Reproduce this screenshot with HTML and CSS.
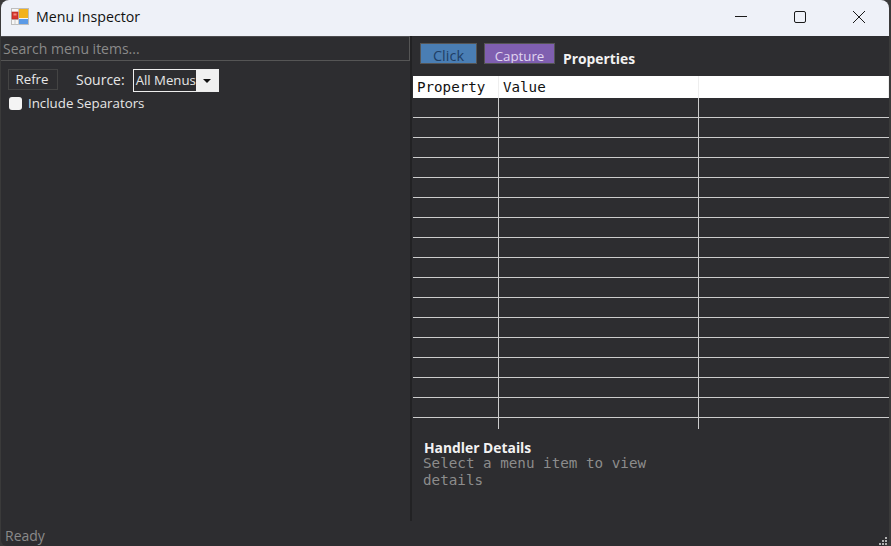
FILE: index.html
```html
<!DOCTYPE html>
<html lang="en">
<head>
<meta charset="utf-8">
<title>Menu Inspector</title>
<link rel="stylesheet" href="styles.css">
</head>
<body>
<div class="window">
  <header class="titlebar">
    <svg class="app-icon" width="18" height="17" viewBox="0 0 18 17">
      <rect x="0.5" y="0.5" width="17" height="16" fill="#f6f6f6" stroke="#bdbdbd"/>
      <path d="M0.5 11.5H7.5M4 11.5V16.5M7.5 0.5V16.5" stroke="#c8c8c8" fill="none"/>
      <rect x="1" y="4" width="6" height="7" fill="#d8342c" stroke="#b02a24" stroke-width="0.6"/>
      <rect x="2.5" y="5.5" width="3" height="2" fill="#ee8a80"/>
      <rect x="8" y="1" width="9" height="9" fill="#f2b21c"/>
      <rect x="8" y="11" width="9" height="5" fill="#5b9ae6"/>
    </svg>
    <span class="title">Menu Inspector</span>
    <div class="controls">
      <button class="ctl" aria-label="Minimize"><svg width="12" height="12" viewBox="0 0 12 12"><path d="M0 5.5H12" stroke="#1a1a1a" fill="none"/></svg></button>
      <button class="ctl" aria-label="Maximize"><svg width="12" height="12" viewBox="0 0 12 12"><rect x="0.5" y="0.5" width="11" height="11" rx="1.5" stroke="#1a1a1a" fill="none"/></svg></button>
      <button class="ctl" aria-label="Close"><svg width="12" height="12" viewBox="0 0 12 12"><path d="M0 0L12 12M12 0L0 12" stroke="#1a1a1a" fill="none"/></svg></button>
    </div>
  </header>
  <main class="content">
    <section class="left">
      <div class="search">Search menu items...</div>
      <div class="toolbar">
        <button class="refresh">Refre</button>
        <span class="source-label">Source:</span>
        <div class="combo"><span class="combo-text">All Menus</span><span class="combo-arrow"></span></div>
      </div>
      <label class="check"><span class="box"></span>Include Separators</label>
    </section>
    <div class="splitter"></div>
    <section class="right">
      <div class="actions">
        <button class="btn btn-click">Click</button>
        <button class="btn btn-capture">Capture</button>
        <h2 class="heading">Properties</h2>
      </div>
      <div class="grid">
        <div class="grid-head">
          <div class="cell c1">Property</div>
          <div class="cell c2">Value</div>
          <div class="cell c3"></div>
        </div>
        <div class="grid-body">
          <div class="row"></div><div class="row"></div><div class="row"></div><div class="row"></div>
          <div class="row"></div><div class="row"></div><div class="row"></div><div class="row"></div>
          <div class="row"></div><div class="row"></div><div class="row"></div><div class="row"></div>
          <div class="row"></div><div class="row"></div><div class="row"></div><div class="row"></div>
          <div class="row last"></div>
        </div>
      </div>
      <div class="details">
        <h2 class="heading">Handler Details</h2>
        <p class="details-text">Select a menu item to view details</p>
      </div>
    </section>
  </main>
  <footer class="status">
    <span>Ready</span>
    <svg class="grip" width="10" height="9" viewBox="0 0 10 9" fill="#b0b0b0"><rect x="6" y="0" width="2" height="2"/><rect x="3" y="3" width="2" height="2"/><rect x="6" y="3" width="2" height="2"/><rect x="0" y="6" width="2" height="2"/><rect x="3" y="6" width="2" height="2"/><rect x="6" y="6" width="2" height="2"/></svg>
  </footer>
</div>
</body>
</html>
```
FILE: styles.css
```css
* { box-sizing: border-box; }
html, body { margin: 0; height: 100%; background: #3a3a3a; overflow: hidden; }
body { font-family: "Open Sans", "Liberation Sans", sans-serif; }
.window { width: 888px; height: 546px; margin-left: 1px; display: flex; flex-direction: column; background: #2d2d30; border-radius: 8px 8px 6px 6px; overflow: hidden; color: #e6e6e6; }
.titlebar { height: 36px; flex: none; background: #eef1f8; display: flex; align-items: center; padding: 0 1px 3px 10px; }
.app-icon { flex: none; }
.title { margin-left: 7px; font: 14.2px "Open Sans", sans-serif; color: #111; }
.controls { margin-left: auto; display: flex; }
.ctl { width: 59px; height: 33px; padding: 0; border: 0; background: none; display: flex; align-items: center; justify-content: center; }
.content { flex: 1; display: flex; min-height: 0; }
.left { width: 409px; flex: none; }
.search { height: 25px; border-top: 1px solid #4c4c4f; border-bottom: 1px solid #555; border-right: 1px solid #555; padding-left: 2px; font: 14px/24px "Open Sans", sans-serif; color: #8a8a8a; }
.toolbar { display: flex; align-items: center; padding: 6px 0 0 7px; height: 30px; }
.refresh { width: 50px; height: 21px; background: #2d2d30; border: 1px solid #444; color: #e6e6e6; font: 13.3px/18px "Open Sans", sans-serif; padding: 0 2px 0 0; }
.source-label { margin-left: 18px; font: 14px/18px "Open Sans", sans-serif; position: relative; top: 1px; }
.combo { width: 86px; height: 23px; margin-left: 8px; display: flex; border: 1px solid #eee; position: relative; top: 1px; }
.combo-text { flex: 1; font: 13.2px/20px "Open Sans", sans-serif; padding-left: 2px; white-space: nowrap; }
.combo-arrow { width: 22px; flex: none; background: #f0f0f0; position: relative; }
.combo-arrow::after { content: ""; position: absolute; left: 7px; top: 9px; border: 4px solid transparent; border-top-color: #111; border-bottom: 0; }
.check { display: flex; align-items: center; margin: 3px 0 0 8px; font: 13.3px "Open Sans", sans-serif; }
.box { width: 13px; height: 13px; background: #f4f4f4; border-radius: 3px; margin-right: 6px; }
.splitter { width: 2px; height: 485px; flex: none; background: #222224; }
.right { flex: 1; min-width: 0; padding-left: 1px; }
.actions { height: 40px; display: flex; align-items: flex-start; padding: 7px 0 0 7px; }
.btn { height: 21px; border: 1px solid #555; padding: 3px 0 0; font: 13.3px/18px "Open Sans", sans-serif; overflow: hidden; display: block; }
.btn-click { width: 57px; background: #4a7eb4; color: #1f3f66; font-size: 14.5px; }
.btn-capture { width: 71px; margin-left: 7px; background: #7f5fb0; color: #e0d6f0; }
.heading { margin: 0; font: 700 13.85px/19px "Open Sans", sans-serif; color: #f2f2f2; }
.actions .heading { margin: 6px 0 0 8px; }
.grid { height: 353px; }
.grid-head { display: grid; grid-template-columns: 86px 200px 1fr; height: 22px; background: #fff; }
.cell { font: 14.2px/22px "DejaVu Sans Mono", monospace; color: #111; padding-left: 4px; border-right: 1px solid #eee; }
.grid-body { height: 331px; background: linear-gradient(#ccc,#ccc) 85px 0/1px 100% no-repeat, linear-gradient(#ccc,#ccc) 285px 0/1px 100% no-repeat; }
.row { height: 20px; border-bottom: 1px solid #ccc; }
.row.last { height: 11px; border-bottom: 0; }
.details { padding: 11px 0 0 10px; width: 250px; }
.details .heading { margin-left: 1px; line-height: 15px; }
.details-text { margin: 0; font: 14.25px/17px "DejaVu Sans Mono", monospace; color: #8c8c8c; }
.status { position: relative; height: 25px; flex: none; padding: 5px 0 0 4px; font: 14px/19px "Open Sans", sans-serif; color: #8a8a8a; }
.grip { position: absolute; right: 0; bottom: 0; }
```
